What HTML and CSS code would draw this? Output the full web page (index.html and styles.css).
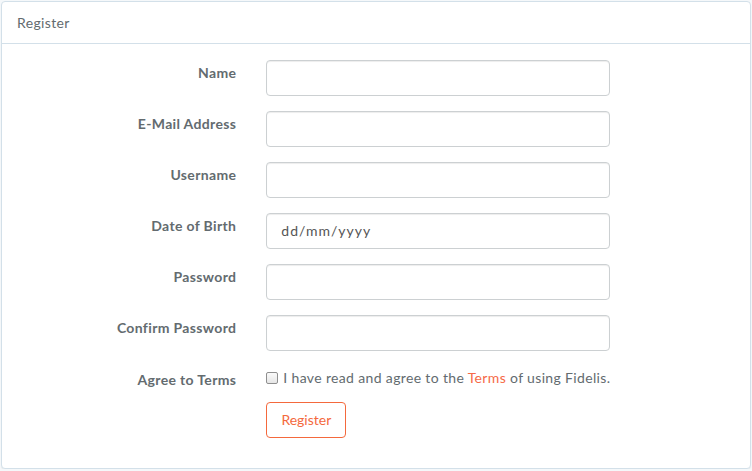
FILE: index.html
```html
<!DOCTYPE html>
<html>
<head>
<meta charset="utf-8">
<link rel="stylesheet" href="styles.css">
</head>
<body>
<div class="panel">
  <div class="panel-heading">Register</div>
  <div class="panel-body">
    <form class="form">
      <div class="group">
        <label class="label">Name</label>
        <div class="field"><input class="input" type="text"></div>
      </div>
      <div class="group">
        <label class="label">E-Mail Address</label>
        <div class="field"><input class="input" type="text"></div>
      </div>
      <div class="group">
        <label class="label">Username</label>
        <div class="field"><input class="input" type="text"></div>
      </div>
      <div class="group">
        <label class="label">Date of Birth</label>
        <div class="field"><div class="input date">dd/mm/yyyy</div></div>
      </div>
      <div class="group">
        <label class="label">Password</label>
        <div class="field"><input class="input" type="password"></div>
      </div>
      <div class="group">
        <label class="label">Confirm Password</label>
        <div class="field"><input class="input" type="password"></div>
      </div>
      <div class="group group-check">
        <label class="label label-check">Agree to Terms</label>
        <div class="field check">
          <span class="box"></span>
          <span>I have read and agree to the <a class="link">Terms</a> of using Fidelis.</span>
        </div>
      </div>
      <div class="group">
        <div class="label"></div>
        <div class="field"><button class="btn" type="button">Register</button></div>
      </div>
    </form>
  </div>
</div>
</body>
</html>
```
FILE: styles.css
```css
html, body {
  margin: 0;
  padding: 0;
  background: #f5f8fa;
}
body {
  padding: 1px 1px 0 1px;
  font-family: "Lato", "Open Sans", sans-serif;
  font-size: 14px;
  line-height: 1.6;
  color: #636b6f;
  letter-spacing: 0.35px;
}
.panel {
  width: 748px;
  background: #fff;
  border: 1px solid #d3e0e9;
  border-radius: 4px;
  box-shadow: 0 1px 1px rgba(0,0,0,0.05);
}
.panel-heading {
  padding: 10px 15px;
  line-height: 21px;
  border-bottom: 1px solid #d3e0e9;
  color: #636b6f;
}
.panel-body {
  padding: 16px 15px 15px 15px;
}
.form {
  margin: 0 -15px;
}
.group {
  display: flex;
  align-items: flex-start;
  margin-bottom: 15px;
}
.group-check {
  height: 21px;
}
.label {
  box-sizing: border-box;
  width: 249.33px;
  padding: 2px 15px 0 15px;
  text-align: right;
  font-weight: 700;
}
.label-check {
  padding-top: 3px;
}
.field {
  box-sizing: border-box;
  width: 374px;
  padding: 0 15px;
}
.input {
  display: block;
  box-sizing: border-box;
  width: 100%;
  height: 36px;
  padding: 6px 12px;
  font: inherit;
  color: #555;
  background: #fff;
  border: 1px solid #ccd0d2;
  border-radius: 4px;
  box-shadow: inset 0 1px 1px rgba(0,0,0,0.075);
  outline: none;
}
.date {
  color: #555;
  line-height: 22px;
  padding-left: 14px;
  letter-spacing: 1px;
}
.check {
  display: flex;
  align-items: center;
  gap: 5px;
  height: 22px;
  padding-top: 2px;
  padding-bottom: 0;
  white-space: nowrap;
}
.box {
  box-sizing: border-box;
  width: 12px;
  height: 12px;
  border: 1px solid #8f8f8f;
  border-radius: 2px;
  background: linear-gradient(#fafafa, #e6e6e6);
  flex: none;
}
.link {
  color: #f66a48;
  text-decoration: none;
}
.btn {
  width: 80px;
  height: 36px;
  padding: 6px 0;
  font: inherit;
  color: #f4693d;
  background: #fff;
  border: 1px solid #f4693d;
  border-radius: 4px;
  cursor: pointer;
}
```
